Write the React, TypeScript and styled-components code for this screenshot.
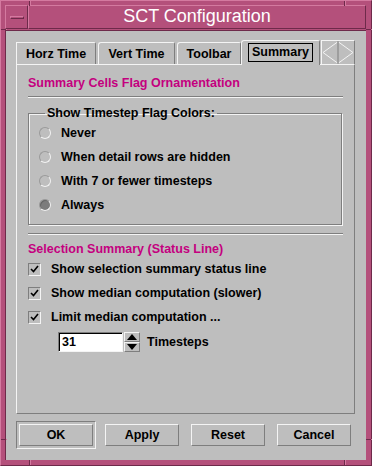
import React from 'react';
import styled, { createGlobalStyle } from 'styled-components';

const pink = '#b4507b';
const pinkLight = '#d47aa0';
const pinkDark = '#6e2a4a';
const gray = '#bebebe';
const light = '#f4f4f4';
const shadow = '#7e7e7e';
const accent = '#c4007f';

const GlobalStyle = createGlobalStyle`
    html, body {
        margin: 0;
        padding: 0;
        background: ${pink};
    }
    body {
        font-family: 'Liberation Sans', Arial, sans-serif;
        font-weight: bold;
        font-size: 12.5px;
        color: #000;
    }
`;

const Frame = styled('div')`
    position: relative;
    box-sizing: border-box;
    width: 372px;
    height: 466px;
    background: ${pink};
    border-top: 1px solid ${pinkLight};
    border-left: 1px solid ${pinkLight};
    border-right: 1px solid ${pinkDark};
    border-bottom: 1px solid ${pinkDark};
    padding: 4px 5px 5px 4px;
    display: flex;
    flex-direction: column;
`;

const Tick = styled('span')<{ $side: 'top' | 'bottom' | 'left' | 'right'; $at: number }>`
    position: absolute;
    background: ${pinkDark};
    ${(p) =>
        p.$side === 'top' || p.$side === 'bottom'
            ? `width: 1px; height: 5px; left: ${p.$at}px; ${p.$side}: 0;`
            : `height: 1px; width: 5px; top: ${p.$at}px; ${p.$side}: 0;`}
    box-shadow: 1px 0 0 ${pinkLight};
`;

const TitleBar = styled('div')`
    display: flex;
    height: 24px;
    box-sizing: border-box;
`;

const MenuButton = styled('div')`
    width: 23px;
    box-sizing: border-box;
    border-top: 1px solid ${pinkLight};
    border-left: 1px solid ${pinkLight};
    border-right: 1px solid ${pinkDark};
    border-bottom: 1px solid ${pinkDark};
    display: flex;
    align-items: center;
    justify-content: center;
`;

const MenuBar = styled('span')`
    width: 14px;
    height: 3px;
    box-sizing: border-box;
    border-top: 1px solid ${pinkLight};
    border-left: 1px solid ${pinkLight};
    border-right: 1px solid ${pinkDark};
    border-bottom: 1px solid ${pinkDark};
`;

const Title = styled('div')`
    flex: 1;
    box-sizing: border-box;
    border-top: 1px solid ${pinkLight};
    border-left: 1px solid ${pinkLight};
    border-right: 1px solid ${pinkDark};
    border-bottom: 1px solid ${pinkDark};
    color: #fff;
    font-weight: normal;
    font-size: 18px;
    font-family: 'Liberation Sans', Arial, sans-serif;
    display: flex;
    align-items: center;
    justify-content: center;
    padding-bottom: 1px;
`;

const Client = styled('div')`
    flex: 1;
    margin-top: 1px;
    background: ${gray};
    border-top: 1px solid ${pinkDark};
    border-left: 1px solid ${pinkDark};
    display: flex;
    flex-direction: column;
    padding: 7px 0 0 10px;
`;

const TabRow = styled('div')`
    display: flex;
    align-items: flex-end;
    height: 26px;
`;

const Tab = styled('div')<{ $active?: boolean; $first?: boolean; $w: number; $gap: number }>`
    box-sizing: border-box;
    width: ${(p) => p.$w}px;
    height: ${(p) => (p.$active ? 25 : 22)}px;
    margin-right: ${(p) => p.$gap}px;
    margin-bottom: ${(p) => (p.$active ? -1 : 0)}px;
    border-top: 1px solid ${light};
    border-left: 1px solid ${light};
    border-right: 1px solid ${shadow};
    border-top-left-radius: ${(p) => (p.$first ? 0 : 3)}px;
    border-top-right-radius: 2px;
    background: ${gray};
    position: relative;
    z-index: ${(p) => (p.$active ? 1 : 0)};
    display: flex;
    align-items: center;
    justify-content: center;
    padding-bottom: ${(p) => (p.$active ? 2 : 0)}px;
`;

const FocusBox = styled('span')`
    border: 1px solid #000;
    height: 17px;
    line-height: 17px;
    padding: 0 3px;
`;

const ArrowBox = styled('div')`
    width: 34px;
    height: 24px;
    box-sizing: border-box;
    border-top: 1px solid ${light};
    border-left: 1px solid ${light};
    border-right: 1px solid ${shadow};
    display: flex;
`;

const Panel = styled('div')`
    box-sizing: border-box;
    width: 339px;
    height: 350px;
    border-top: 1px solid ${light};
    border-left: 1px solid ${light};
    border-right: 1px solid ${shadow};
    border-bottom: 1px solid ${shadow};
    padding: 10px 11px 0 11px;
    display: flex;
    flex-direction: column;
`;

const Heading = styled('div')`
    color: ${accent};
    height: 16px;
    line-height: 16px;
`;

const Separator = styled('div')<{ $top: number; $bottom: number }>`
    height: 0;
    border-top: 1px solid ${shadow};
    border-bottom: 1px solid ${light};
    margin: ${(p) => p.$top}px 0 ${(p) => p.$bottom}px 0;
`;

const Group = styled('fieldset')`
    margin: 0 1px 0 0;
    padding: 0 0 7px 10px;
    border: 1px solid ${shadow};
    box-shadow: 1px 1px 0 ${light}, inset 1px 1px 0 ${light};
`;

const Legend = styled('legend')`
    padding: 0 2px;
    margin-left: 6px;
    line-height: 15px;
`;

const OptionRow = styled('label')`
    display: flex;
    align-items: center;
    height: 24px;
    gap: 10px;
`;

const Radio = styled('span')<{ $on?: boolean }>`
    width: 12px;
    height: 12px;
    box-sizing: border-box;
    border-radius: 50%;
    border: 1px solid;
    border-color: #9a9a9a #f2f2f2 #f2f2f2 #9a9a9a;
    background: ${(p) => (p.$on ? '#7c7c7c' : gray)};
    box-shadow: ${(p) => (p.$on ? 'inset 1px 1px 0 #666' : 'none')};
`;

const ChecksBlock = styled('div')`
    margin-top: 0;
`;

const Check = styled('span')`
    width: 13px;
    height: 13px;
    box-sizing: border-box;
    border: 1px solid;
    border-color: ${shadow} ${light} ${light} ${shadow};
    display: flex;
    align-items: center;
    justify-content: center;
`;

const SpinRow = styled('div')`
    display: flex;
    align-items: center;
    height: 22px;
    margin: 2px 0 0 30px;
`;

const SpinInput = styled('div')`
    width: 65px;
    height: 20px;
    box-sizing: border-box;
    background: #fff;
    border: 1px solid;
    border-color: ${shadow} ${light} ${light} ${shadow};
    box-shadow: inset 1px 1px 0 #000;
    padding: 1px 0 0 3px;
    line-height: 17px;
`;

const SpinButtons = styled('div')`
    width: 16px;
    height: 20px;
    display: flex;
    flex-direction: column;
    margin: 0 7px 0 1px;
`;

const SpinArrow = styled('span')`
    flex: 1;
    display: flex;
    align-items: center;
    justify-content: center;
    box-sizing: border-box;
    border: 1px solid;
    border-color: ${light} ${shadow} ${shadow} ${light};
`;

const ButtonRow = styled('div')`
    display: flex;
    align-items: center;
    height: 28px;
    margin-top: 7px;
`;

const DefaultRing = styled('div')`
    box-sizing: border-box;
    padding: 2px;
    border: 1px solid;
    border-color: ${shadow} ${light} ${light} ${shadow};
    margin-right: 9px;
`;

const Button = styled('button')<{ $gap?: number }>`
    width: 74px;
    height: 22px;
    box-sizing: border-box;
    background: ${gray};
    border: 1px solid;
    border-color: ${light} ${shadow} ${shadow} ${light};
    font-family: 'Liberation Sans', Arial, sans-serif;
    font-weight: bold;
    font-size: 12.5px;
    color: #000;
    padding: 0;
    margin-right: ${(p) => p.$gap ?? 12}px;
`;

const TickMark = () => (
    <svg width="9" height="8" viewBox="0 0 9 8">
        <path d="M1 4 L3.5 6.5 L8 1" fill="none" stroke="#000" strokeWidth="1.6" />
    </svg>
);

const Triangle = ({ up }: { up?: boolean }) => (
    <svg width="10" height="6" viewBox="0 0 10 6">
        <path d={up ? 'M0 6 L5 0 L10 6 Z' : 'M0 0 L5 6 L10 0 Z'} fill="#000" />
    </svg>
);

const TabArrows = () => (
    <svg width="32" height="23" viewBox="0 0 32 23">
        <path d="M15.5 1 L1 11.5 L15.5 22" fill="none" stroke={light} strokeWidth="1" />
        <path d="M16.5 1 L31 11.5 L16.5 22" fill="none" stroke={light} strokeWidth="1" />
        <line x1="16" y1="0" x2="16" y2="23" stroke={shadow} />
    </svg>
);

const radios = ['Never', 'When detail rows are hidden', 'With 7 or fewer timesteps', 'Always'];
const checks = ['Show selection summary status line', 'Show median computation (slower)', 'Limit median computation ...'];

export default function App() {
    return (
        <>
            <GlobalStyle />
            <Frame>
                <Tick $side="top" $at={28} />
                <Tick $side="top" $at={343} />
                <Tick $side="bottom" $at={28} />
                <Tick $side="bottom" $at={343} />
                <Tick $side="left" $at={28} />
                <Tick $side="left" $at={438} />
                <Tick $side="right" $at={28} />
                <Tick $side="right" $at={438} />
                <TitleBar>
                    <MenuButton>
                        <MenuBar />
                    </MenuButton>
                    <Title>SCT Configuration</Title>
                </TitleBar>
                <Client>
                    <TabRow>
                        <Tab $first $w={80} $gap={2}>Horz Time</Tab>
                        <Tab $w={77} $gap={2}>Vert Time</Tab>
                        <Tab $w={64} $gap={0}>Toolbar</Tab>
                        <Tab $active $w={79} $gap={1}>
                            <FocusBox>Summary</FocusBox>
                        </Tab>
                        <ArrowBox>
                            <TabArrows />
                        </ArrowBox>
                    </TabRow>
                    <Panel>
                        <Heading>Summary Cells Flag Ornamentation</Heading>
                        <Separator $top={5} $bottom={8} />
                        <Group>
                            <Legend>Show Timestep Flag Colors:</Legend>
                            {radios.map((r) => (
                                <OptionRow key={r}>
                                    <Radio $on={r === 'Always'} />
                                    {r}
                                </OptionRow>
                            ))}
                        </Group>
                        <Separator $top={8} $bottom={6} />
                        <Heading>Selection Summary (Status Line)</Heading>
                        <ChecksBlock>
                            {checks.map((c) => (
                                <OptionRow key={c}>
                                    <Check>
                                        <TickMark />
                                    </Check>
                                    {c}
                                </OptionRow>
                            ))}
                        </ChecksBlock>
                        <SpinRow>
                            <SpinInput>31</SpinInput>
                            <SpinButtons>
                                <SpinArrow>
                                    <Triangle up />
                                </SpinArrow>
                                <SpinArrow>
                                    <Triangle />
                                </SpinArrow>
                            </SpinButtons>
                            Timesteps
                        </SpinRow>
                    </Panel>
                    <ButtonRow>
                        <DefaultRing>
                            <Button $gap={0}>OK</Button>
                        </DefaultRing>
                        <Button>Apply</Button>
                        <Button>Reset</Button>
                        <Button $gap={0}>Cancel</Button>
                    </ButtonRow>
                </Client>
            </Frame>
        </>
    );
}
